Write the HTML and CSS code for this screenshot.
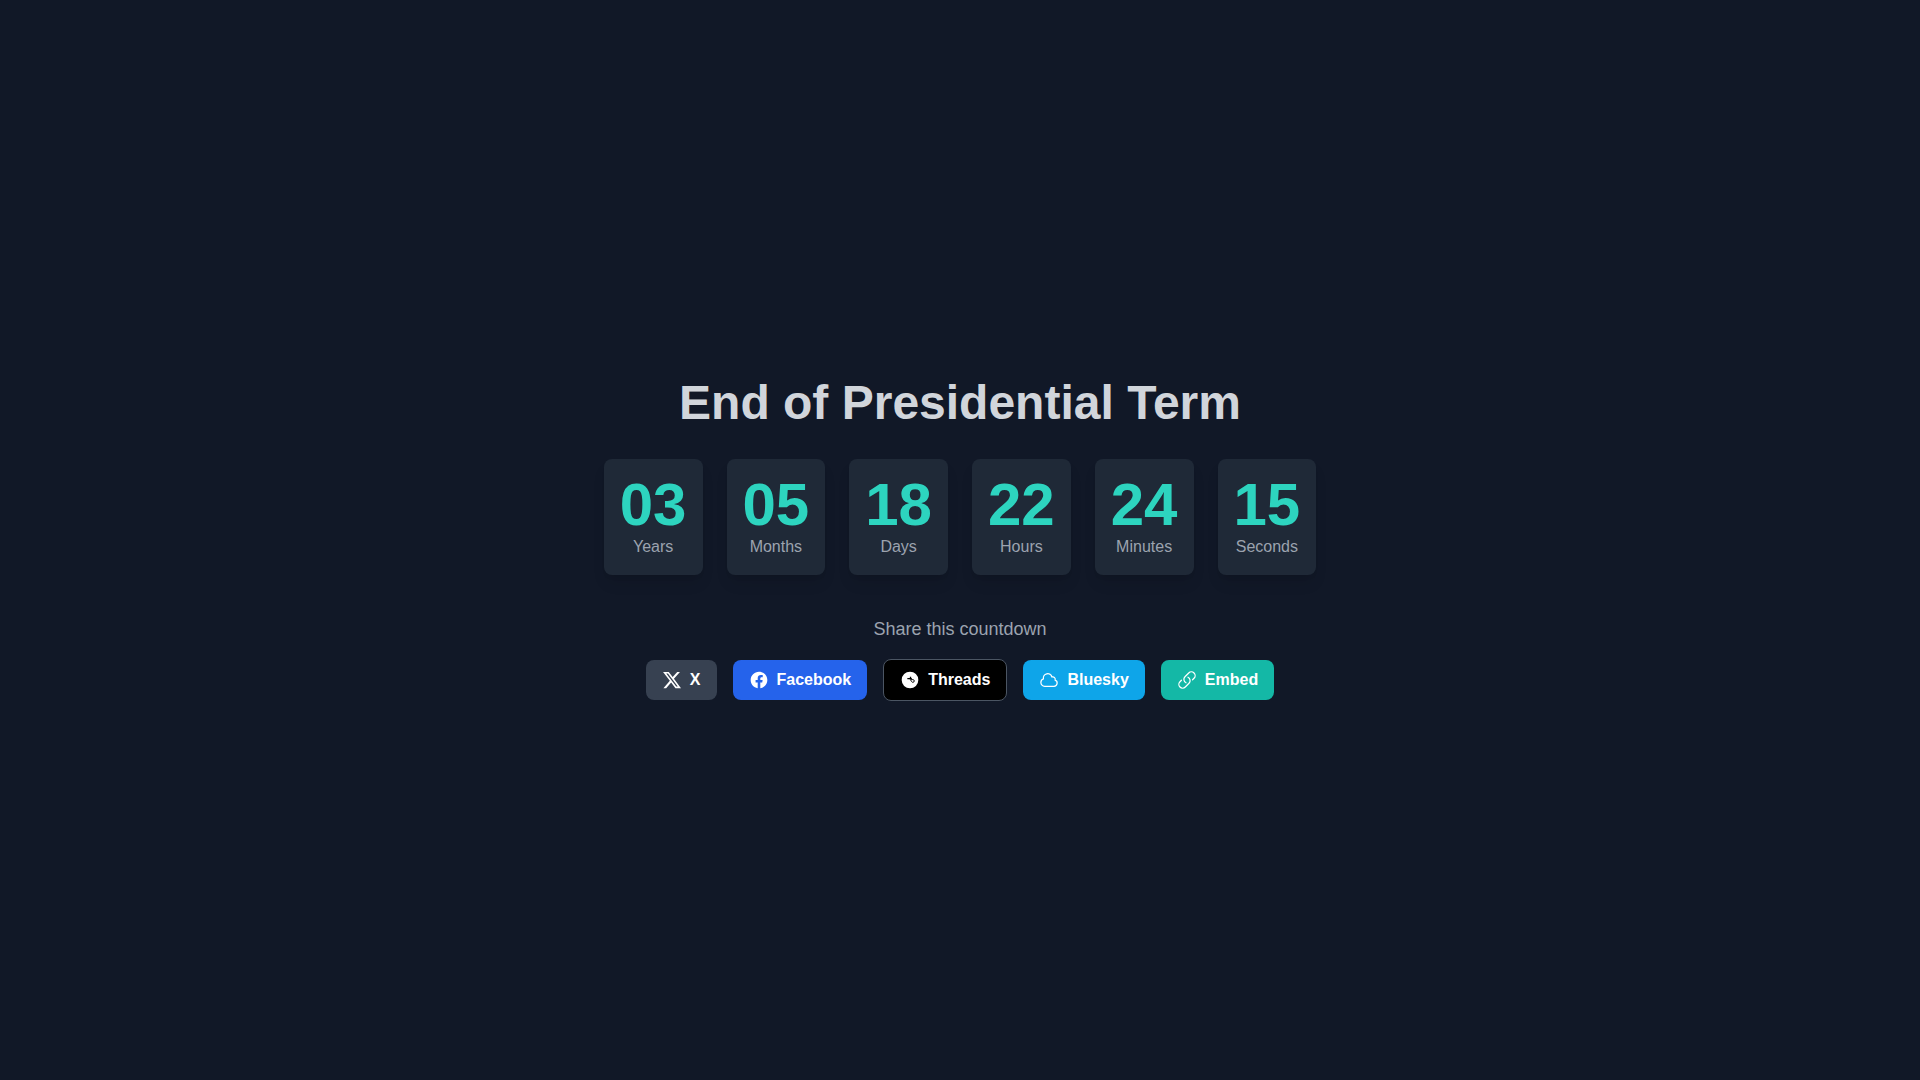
FILE: index.html
```html
<!DOCTYPE html>
<html lang="en">

<head>
    <meta charset="UTF-8">
    <meta name="viewport" content="width=device-width, initial-scale=1.0">
    <title>End of Presidential Term</title>
    <link rel="stylesheet" href="styles.css">
</head>

<body>
    <main class="container">
        <h1 class="title">End of Presidential Term</h1>

        <div class="countdown">
            <div class="unit">
                <div class="value" id="years">03</div>
                <div class="label">Years</div>
            </div>
            <div class="unit">
                <div class="value" id="months">05</div>
                <div class="label">Months</div>
            </div>
            <div class="unit">
                <div class="value" id="days">18</div>
                <div class="label">Days</div>
            </div>
            <div class="unit">
                <div class="value" id="hours">22</div>
                <div class="label">Hours</div>
            </div>
            <div class="unit">
                <div class="value" id="minutes">24</div>
                <div class="label">Minutes</div>
            </div>
            <div class="unit">
                <div class="value" id="seconds">15</div>
                <div class="label">Seconds</div>
            </div>
        </div>

        <section class="share">
            <p class="share-text">Share this countdown</p>
            <div class="share-buttons">
                <a class="btn btn-x" href="#">
                    <svg class="icon" viewBox="0 0 24 24" fill="currentColor" aria-hidden="true">
                        <path d="M18.244 2.25h3.308l-7.227 8.26 8.502 11.24H16.17l-5.214-6.817L4.99 21.75H1.68l7.73-8.835L1.254 2.25H8.08l4.713 6.231zm-1.161 17.52h1.833L7.084 4.126H5.117z"/>
                    </svg>
                    <span>X</span>
                </a>
                <a class="btn btn-facebook" href="#">
                    <svg class="icon" viewBox="0 0 24 24" fill="currentColor" aria-hidden="true">
                        <path d="M22 12c0-5.523-4.477-10-10-10S2 6.477 2 12c0 4.991 3.657 9.128 8.438 9.878v-6.987h-2.54V12h2.54V9.797c0-2.506 1.492-3.89 3.777-3.89 1.094 0 2.238.195 2.238.195v2.46h-1.26c-1.243 0-1.63.771-1.63 1.562V12h2.773l-.443 2.89h-2.33v6.988C18.343 21.128 22 16.991 22 12z"/>
                    </svg>
                    <span>Facebook</span>
                </a>
                <a class="btn btn-threads" href="#">
                    <svg class="icon" viewBox="0 0 24 24" aria-hidden="true">
                        <circle cx="12" cy="12" r="10" fill="currentColor"/>
                        <g fill="none" stroke="#000000">
                            <path stroke-width="1.6" d="M8.8 10.4h5.4M12.6 8v3.4"/>
                            <path stroke-width="1.1" d="M12.4 11.4l1.4 2.4c.4.7 1 1 1.7 1 1 0 1.6-.7 1.6-1.7s-.7-1.6-1.6-1.6h-2.2"/>
                        </g>
                    </svg>
                    <span>Threads</span>
                </a>
                <a class="btn btn-bluesky" href="#">
                    <svg class="icon icon-outline" viewBox="0 0 24 24" aria-hidden="true">
                        <path d="M2.25 15a4.5 4.5 0 004.5 4.5H18a3.75 3.75 0 001.332-7.257 3 3 0 00-3.758-3.848 5.25 5.25 0 00-10.233 2.33A4.502 4.502 0 002.25 15z"/>
                    </svg>
                    <span>Bluesky</span>
                </a>
                <button class="btn btn-embed" type="button">
                    <svg class="icon icon-outline" viewBox="0 0 24 24" aria-hidden="true">
                        <path d="M13.19 8.688a4.5 4.5 0 011.242 7.244l-4.5 4.5a4.5 4.5 0 01-6.364-6.364l1.757-1.757m13.35-.622l1.757-1.757a4.5 4.5 0 00-6.364-6.364l-4.5 4.5a4.5 4.5 0 001.242 7.244"/>
                    </svg>
                    <span>Embed</span>
                </button>
            </div>
        </section>
    </main>
</body>

</html>
```

FILE: styles.css
```css
* {
    box-sizing: border-box;
    margin: 0;
    padding: 0;
}

body {
    font-family: "Liberation Sans", Arial, sans-serif;
    font-size: 16px;
    line-height: 24px;
    background-color: #111827;
    color: #FFFFFF;
}

.container {
    display: flex;
    flex-direction: column;
    align-items: center;
    justify-content: center;
    min-height: 100vh;
    text-align: center;
}

.title {
    font-size: 48px;
    line-height: 48px;
    font-weight: bold;
    color: #D1D5DB;
    margin-bottom: 32px;
}

.countdown {
    display: flex;
    flex-wrap: wrap;
    justify-content: center;
    gap: 24px;
}

.unit {
    background-color: #1F2937;
    border-radius: 8px;
    padding: 16px;
    box-shadow: 0 10px 15px -3px rgba(0, 0, 0, 0.1), 0 4px 6px -4px rgba(0, 0, 0, 0.1);
}

.value {
    font-size: 60px;
    line-height: 60px;
    font-weight: bold;
    color: #2DD4BF;
}

.label {
    color: #9CA3AF;
}

.share {
    margin-top: 40px;
}

.share-text {
    font-size: 18px;
    line-height: 28px;
    color: #9CA3AF;
    margin-bottom: 16px;
}

.share-buttons {
    display: flex;
    flex-wrap: wrap;
    align-items: center;
    justify-content: center;
    gap: 16px;
}

.btn {
    display: flex;
    align-items: center;
    gap: 8px;
    padding: 8px 16px;
    border: none;
    border-radius: 8px;
    font: inherit;
    font-weight: bold;
    color: #FFFFFF;
    text-decoration: none;
    cursor: pointer;
    transition: opacity 0.3s ease;
}

.btn:hover {
    opacity: 0.85;
}

.btn-x {
    background-color: #374151;
}

.btn-facebook {
    background-color: #2563EB;
}

.btn-threads {
    background-color: #000000;
    border: 1px solid #4B5563;
}

.btn-bluesky {
    background-color: #0EA5E9;
}

.btn-embed {
    background-color: #14B8A6;
}

.icon {
    width: 20px;
    height: 20px;
}

.icon-outline {
    fill: none;
    stroke: currentColor;
    stroke-width: 1.5;
    stroke-linecap: round;
    stroke-linejoin: round;
}
```
